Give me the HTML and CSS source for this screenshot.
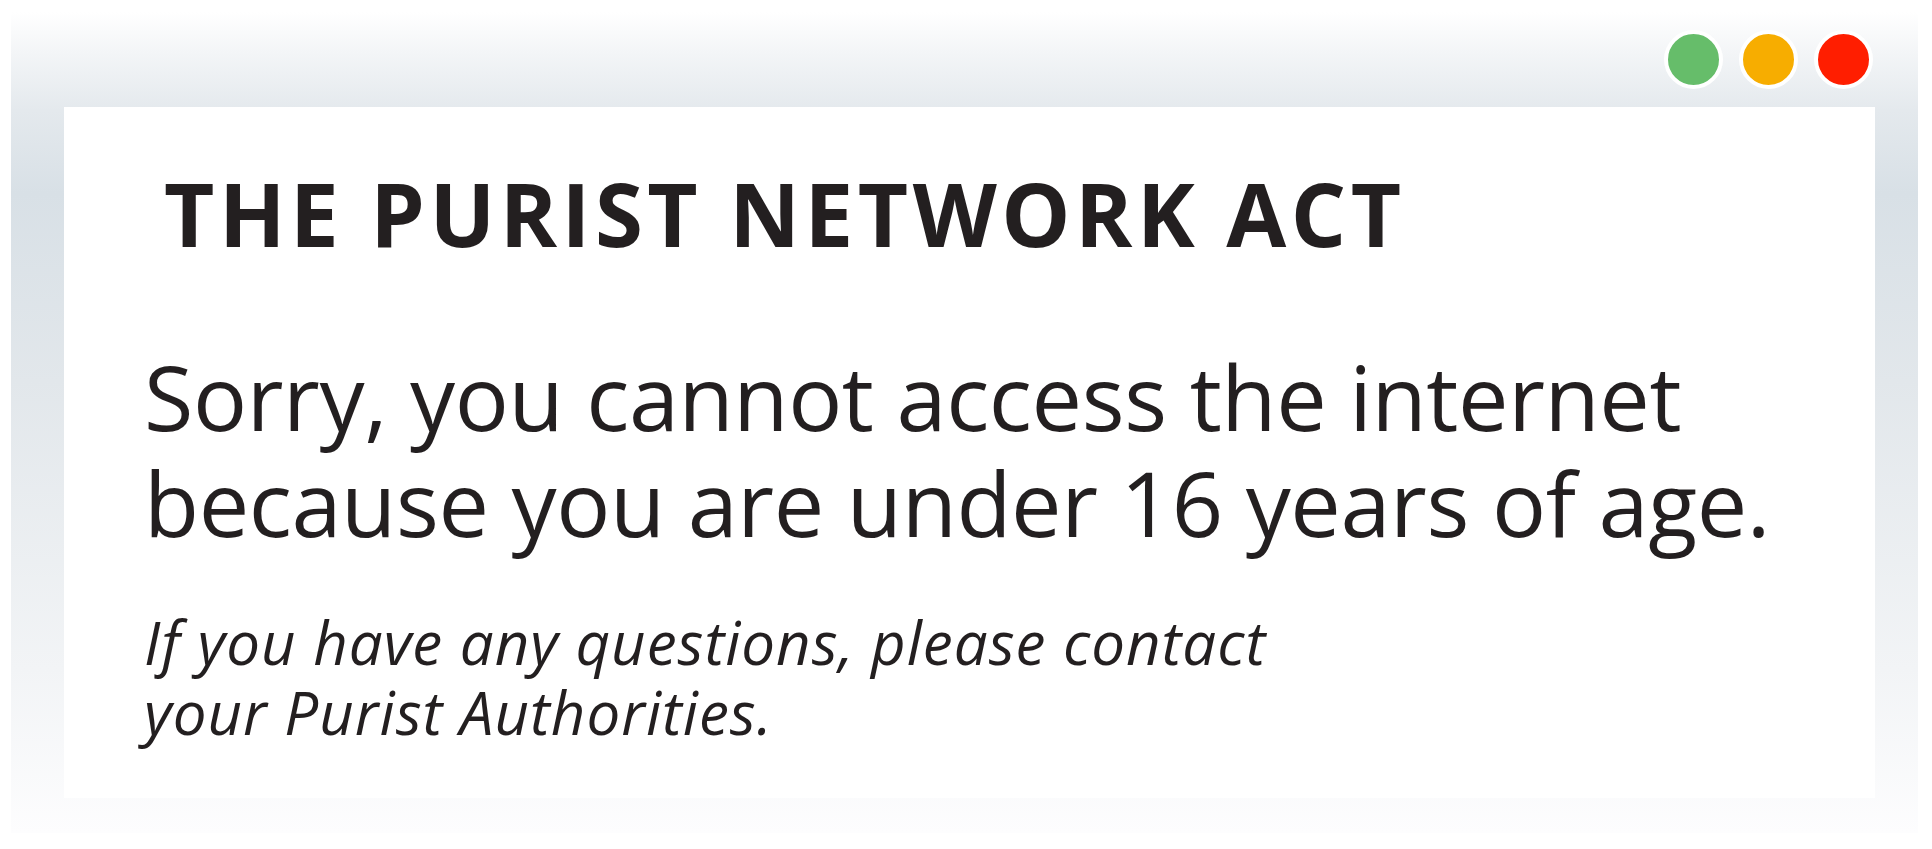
FILE: index.html
```html
<!DOCTYPE html>
<html lang="en">
<head>
<meta charset="utf-8">
<title>The Purist Network Act</title>
<link rel="stylesheet" href="styles.css">
</head>
<body>
<div class="frame">
  <div class="titlebar">
    <span class="dot dot-green"></span>
    <span class="dot dot-orange"></span>
    <span class="dot dot-red"></span>
  </div>
  <main class="panel">
    <h1 class="title">THE PURIST NETWORK ACT</h1>
    <p class="message">Sorry, you cannot access the internet<br>because you are under 16 years of age.</p>
    <p class="note">If you have any questions, please contact<br>your Purist Authorities.</p>
  </main>
</div>
</body>
</html>
```

FILE: styles.css
```css
html, body {
  margin: 0;
  padding: 0;
  background: #ffffff;
}

body {
  font-family: "Open Sans", "Noto Sans", sans-serif;
  color: #231f20;
}

.frame {
  box-sizing: border-box;
  width: 1907px;
  height: 821px;
  margin: 12px 0 0 11px;
  padding: 0 43px 35px 53px;
  display: flex;
  flex-direction: column;
  background: linear-gradient(to bottom,
    #ffffff 0%,
    #f3f5f7 5%,
    #e4e9ed 12%,
    #d8e0e6 22%,
    #e2e7eb 45%,
    #f2f4f6 80%,
    #fdfdfe 100%);
}

.titlebar {
  height: 95px;
  flex: none;
  display: flex;
  justify-content: flex-end;
  align-items: center;
  gap: 16px;
  padding-right: 2px;
}

.dot {
  width: 51px;
  height: 51px;
  border-radius: 50%;
  border: 4px solid #ffffff;
  box-sizing: content-box;
}

.dot-green { background: #66bd6a; }
.dot-orange { background: #f7ad00; }
.dot-red { background: #ff1e00; }

.panel {
  flex: 1;
  background: #ffffff;
  padding: 56px 80px 0 80px;
  white-space: nowrap;
}

.title {
  margin: 0 0 80px 20px;
  font-size: 87px;
  line-height: 100px;
  font-weight: 700;
  letter-spacing: 4.5px;
}

.message {
  margin: 0 0 52px 0;
  font-size: 90px;
  line-height: 106px;
  font-weight: 400;
  letter-spacing: -0.4px;
}

.note {
  margin: 0;
  font-size: 60px;
  line-height: 70px;
  font-style: italic;
  letter-spacing: 1px;
}
```
